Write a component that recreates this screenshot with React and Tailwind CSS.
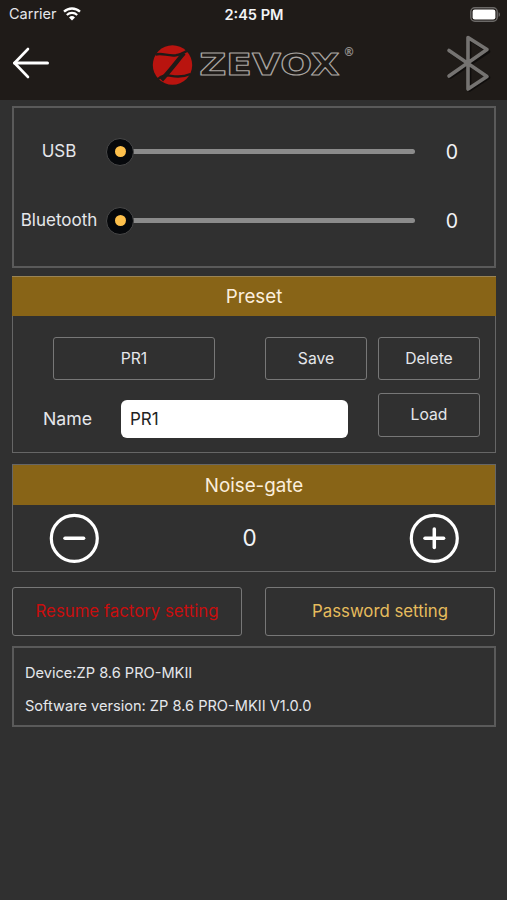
import { useState } from 'react'

const WifiIcon = () => (
  <svg width="18" height="14" viewBox="0 0 18 14" fill="none">
    <path d="M1 4.7a11.6 11.6 0 0 1 16 0" stroke="#fff" strokeWidth="2.3" />
    <path d="M3.8 7.9a7.6 7.6 0 0 1 10.4 0" stroke="#fff" strokeWidth="2.1" />
    <path d="M9 13.6 6 10.5a4.4 4.4 0 0 1 6 0z" fill="#fff" />
  </svg>
)

const BatteryIcon = () => (
  <svg width="31" height="15" viewBox="0 0 31 15" fill="none">
    <rect x="0.8" y="0.8" width="26.4" height="13.4" rx="4" stroke="#6b6967" strokeWidth="1.4" />
    <rect x="2.6" y="2.6" width="22.8" height="9.8" rx="2.2" fill="#fff" />
    <path d="M28.6 5.2c1.8.6 1.8 4 0 4.6z" fill="#6b6967" />
  </svg>
)

const BackArrow = () => (
  <svg width="38" height="32" viewBox="0 0 38 32" fill="none" stroke="#fff" strokeLinecap="round">
    <path d="M2.5 16h33" strokeWidth="3" />
    <path d="M16 2 2.5 16 16 30" strokeWidth="2.6" strokeLinejoin="round" />
  </svg>
)

const BluetoothIcon = () => (
  <svg width="46" height="58" viewBox="0 0 46 58" fill="none" strokeLinejoin="round" strokeLinecap="round">
    <path d="M4.5 18 42.5 43.5 23.5 56V5L42.5 17.5 4.5 43" stroke="#0f0d0c" strokeWidth="3.6" />
    <path d="M3 16.5 41 42.5 22 55V3.5L41 15.5 3 42" stroke="#757371" strokeWidth="3.6" />
  </svg>
)

const Logo = () => (
  <svg width="206" height="44" viewBox="0 0 206 44" fill="none">
    <circle cx="22.5" cy="22" r="19.7" fill="#b9140f" />
    {/* Z cut out of the disc */}
    <g stroke="#1f1b18">
      <path d="M5.5 11.6C12 9.4 18 13.4 26 12.2 31 11.3 34 9.6 38 7.2" strokeWidth="2.5" />
      <path d="M7 36.8C13 31 17 32.4 21 32.9 27 33.9 33 34.4 40.5 31" strokeWidth="2.3" />
      <path d="M34 10.2C28 17 22 25.5 11.5 37" strokeWidth="4.2" />
    </g>
    <text
      x="49.2"
      y="32.4"
      textLength="140.5"
      lengthAdjust="spacingAndGlyphs"
      fontFamily="DejaVu Sans, sans-serif"
      fontWeight="700"
      fontSize="31"
      stroke="#aaa6a2"
      strokeWidth="1.1"
      strokeLinejoin="round"
    >
      ZEVOX
    </text>
    <text x="193.3" y="13" fontFamily="DejaVu Sans, sans-serif" fontSize="11.5" fontWeight="700" fill="#8f8b88">®</text>
  </svg>
)

const SliderRow = ({ label, value, onChange }) => (
  <div className="flex h-[69px] items-center">
    <span className="w-[90px] pt-px text-center text-[17px] text-gray-200">{label}</span>
    <div className="relative ml-[2px] flex h-7 w-[309px] items-center">
      <div className="ml-3 h-[5px] w-full rounded-full bg-[#8b8b8b]" />
      <button
        onClick={() => onChange(0)}
        aria-label={label}
        className="absolute left-0 top-0 flex h-7 w-7 items-center justify-center rounded-full border border-[#484848] bg-[#06080b]"
      >
        <span className="h-[11px] w-[11px] rounded-full bg-[#fdc04c]" />
      </button>
    </div>
    <span className="ml-[27px] w-5 pt-[2px] text-center text-[19.5px] text-gray-100">{value}</span>
  </div>
)

const OutlineButton = ({ children, className = '' }) => (
  <button className={`rounded-[3px] border-[1.5px] border-[#777] text-center ${className}`}>{children}</button>
)

const RoundButton = ({ plus, onClick }) => (
  <button onClick={onClick} aria-label={plus ? 'Increase' : 'Decrease'}>
    <svg width="50" height="50" viewBox="0 0 50 50" fill="none" stroke="#fff" strokeLinecap="round">
      <circle cx="25.3" cy="25.3" r="23" strokeWidth="3.2" />
      <path d="M16 25.3h18.6" strokeWidth="3.5" />
      {plus && <path d="M25.3 16v18.6" strokeWidth="3.5" />}
    </svg>
  </button>
)

const App = () => {
  const [usb, setUsb] = useState(0)
  const [bluetooth, setBluetooth] = useState(0)
  const [gate, setGate] = useState(0)
  const [name, setName] = useState('PR1')

  return (
    <div className="flex h-[900px] w-[507px] flex-col overflow-hidden bg-[#303030] font-['Inter',sans-serif] text-gray-200">
      {/* Header */}
      <header className="h-[100px] shrink-0 bg-[#1f1b18]">
        <div className="grid h-7 grid-cols-3 items-center pl-[7px] pr-[6px]">
          <div className="flex items-center gap-[6px] pl-[2px] text-[14.5px] text-gray-200">
            Carrier
            <WifiIcon />
          </div>
          <span className="pt-[2px] text-center text-[14.6px] font-semibold leading-5 text-gray-100">2:45 PM</span>
          <div className="flex justify-end">
            <BatteryIcon />
          </div>
        </div>
        <div className="flex h-[70px] items-center pl-[12px]">
          <BackArrow />
          <div className="ml-[100px] mt-[3px]">
            <Logo />
          </div>
          <div className="ml-[90px]">
            <BluetoothIcon />
          </div>
        </div>
      </header>

      <main className="flex flex-col pl-3 pt-[6px]">
        {/* Input levels */}
        <section className="h-[162px] w-[484px] border-2 border-[#5a5a5a] pt-[9px]">
          <SliderRow label="USB" value={usb} onChange={setUsb} />
          <SliderRow label="Bluetooth" value={bluetooth} onChange={setBluetooth} />
        </section>

        {/* Preset */}
        <section className="mt-2 h-[177px] w-[484px] border-x-[1.5px] border-b-[1.5px] border-[#666]">
          <h2 className="-mx-px flex h-10 items-center justify-center border-t border-[#9a8455] bg-[#886417] pt-px text-[18.8px] text-[#fbeedd]">
            Preset
          </h2>
          <div className="flex pl-[40px] pt-[21px] text-[15.7px]">
            <OutlineButton className="h-[43px] w-[162px]">PR1</OutlineButton>
            <OutlineButton className="ml-[50px] h-[43px] w-[102px]">Save</OutlineButton>
            <OutlineButton className="ml-[11px] h-[43px] w-[102px]">Delete</OutlineButton>
          </div>
          <div className="flex pl-[30px] pt-[13px]">
            <span className="mt-[14px] w-[78px] text-[17.7px] leading-6">Name</span>
            <input
              value={name}
              onChange={(e) => setName(e.target.value)}
              className="mt-[7px] h-[38px] w-[227px] rounded-md bg-white px-[9px] text-[17px] text-[#222]"
            />
            <OutlineButton className="ml-[30px] h-[44px] w-[102px] text-[15.7px]">Load</OutlineButton>
          </div>
        </section>

        {/* Noise gate */}
        <section className="mt-[11px] h-[108px] w-[484px] border-[1.5px] border-[#666]">
          <h2 className="flex h-10 items-center justify-center bg-[#886417] pt-[2px] text-[18.8px] text-[#fbeedd]">Noise-gate</h2>
          <div className="flex h-[66px] items-center justify-between pl-[36px] pr-[36px]">
            <RoundButton onClick={() => setGate((prev) => Math.max(0, prev - 1))} />
            <span className="mr-[9px] text-[22.5px] text-gray-100">{gate}</span>
            <RoundButton plus onClick={() => setGate((prev) => prev + 1)} />
          </div>
        </section>

        <div className="mt-[15px] flex gap-[23px]">
          <OutlineButton className="h-[49px] w-[230px] text-[16.8px] text-[#c90e0e]">Resume factory setting</OutlineButton>
          <OutlineButton className="h-[49px] w-[230px] text-[16.8px] text-[#e6bc5d]">Password setting</OutlineButton>
        </div>

        {/* Device info */}
        <section className="mt-[10px] flex h-[81px] w-[484px] flex-col gap-[13px] border-2 border-[#5a5a5a] pl-[11px] pt-[15px] text-[14.6px] leading-5">
          <p>Device:ZP 8.6 PRO-MKII</p>
          <p>Software version: ZP 8.6 PRO-MKII V1.0.0</p>
        </section>
      </main>
    </div>
  )
}

export default App
